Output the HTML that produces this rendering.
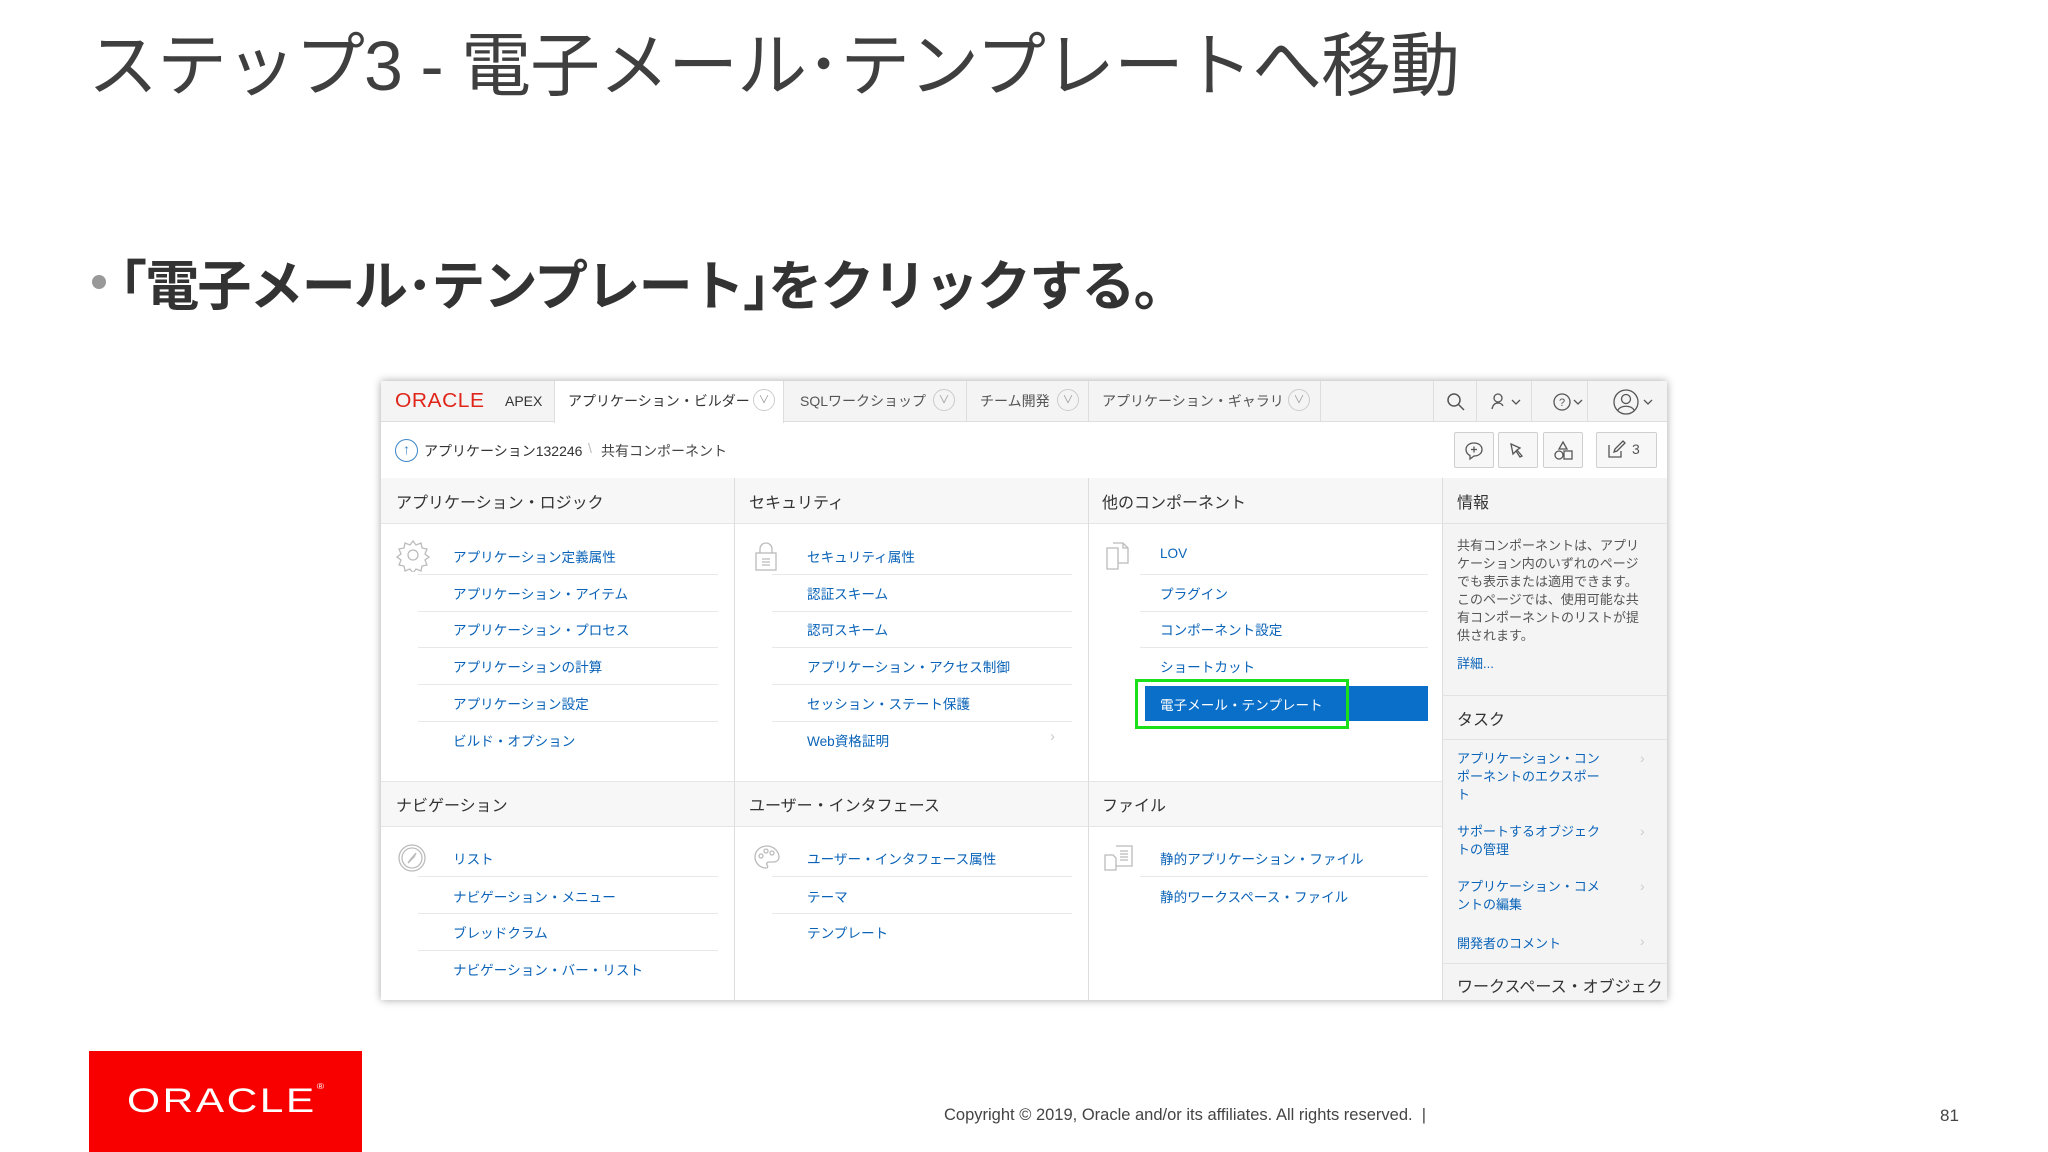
<!DOCTYPE html>
<html><head><meta charset="utf-8"><style>
*{margin:0;padding:0;box-sizing:border-box}
body{width:2048px;height:1152px;background:#fff;position:relative;overflow:hidden;font-family:"Liberation Sans","Noto Sans CJK JP",sans-serif}
.a{position:absolute;white-space:nowrap}
.lk{position:absolute;font-size:13.6px;color:#0a63b8;white-space:nowrap}
.hd{position:absolute;font-size:16px;color:#333;white-space:nowrap}
.sep{position:absolute;height:1px;background:#e8e8e8}
.ln{position:absolute;background:#ddd}
.btn{position:absolute;top:432px;height:36px;border:1px solid #cfcfcf;border-radius:2px;background:#f7f7f7}
</style></head><body>
<div class="a" style="left:88px;top:10px;font-size:70px;color:#3f3f3f;letter-spacing:-1px">ステップ3 - 電子メール･テンプレートへ移動</div>
<div class="a" style="left:92px;top:275px;width:14px;height:14px;border-radius:50%;background:#999"></div>
<div class="a" style="left:120px;top:242px;font-size:54px;color:#333;font-weight:bold;letter-spacing:-1.8px">｢電子メール･テンプレート｣をクリックする。</div>

<!-- screenshot -->
<div class="a" style="left:381px;top:381px;width:1286px;height:619px;background:#fff;box-shadow:0 0 8px rgba(0,0,0,.35)"></div>
<div class="a" style="left:381px;top:381px;width:1286px;height:41px;background:#f4f4f4;border-bottom:1px solid #ddd"></div>
<div class="a" style="left:554px;top:381px;width:230px;height:42px;background:#fff;border-left:1px solid #ddd;border-right:1px solid #ddd"></div>
<div class="a" style="left:395px;top:390px;font-size:20px;color:#e0261b;letter-spacing:0.5px;transform:scaleX(1.05);transform-origin:left">ORACLE</div>
<div class="a" style="left:505px;top:393px;font-size:14px;color:#333">APEX</div>
<div class="a" style="left:568px;top:391px;font-size:14px;color:#333">アプリケーション・ビルダー</div>
<div class="a" style="left:800px;top:391px;font-size:14px;color:#555">SQLワークショップ</div>
<div class="a" style="left:980px;top:391px;font-size:14px;color:#555">チーム開発</div>
<div class="a" style="left:1102px;top:391px;font-size:14px;color:#555">アプリケーション・ギャラリ</div>
<div class="a" style="left:753px;top:389px;width:22px;height:22px;border:1px solid #ccc;border-radius:50%;color:#999;font-size:11px;text-align:center;line-height:20px">∨</div>
<div class="a" style="left:933px;top:389px;width:22px;height:22px;border:1px solid #ccc;border-radius:50%;color:#999;font-size:11px;text-align:center;line-height:20px">∨</div>
<div class="a" style="left:1057px;top:389px;width:22px;height:22px;border:1px solid #ccc;border-radius:50%;color:#999;font-size:11px;text-align:center;line-height:20px">∨</div>
<div class="a" style="left:1288px;top:389px;width:22px;height:22px;border:1px solid #ccc;border-radius:50%;color:#999;font-size:11px;text-align:center;line-height:20px">∨</div>
<div class="ln" style="left:966px;top:381px;width:1px;height:41px"></div>
<div class="ln" style="left:1088px;top:381px;width:1px;height:41px"></div>
<div class="ln" style="left:1320px;top:381px;width:1px;height:41px"></div>
<div class="ln" style="left:1433px;top:381px;width:1px;height:41px"></div>
<div class="ln" style="left:1476px;top:381px;width:1px;height:41px"></div>
<div class="ln" style="left:1531px;top:381px;width:1px;height:41px"></div>
<div class="ln" style="left:1587px;top:381px;width:1px;height:41px"></div>
<svg class="a" style="left:1445px;top:391px" width="22" height="22" viewBox="0 0 22 22" fill="none" stroke="#555" stroke-width="1.5"><circle cx="9" cy="9" r="6"/><path d="M13.5 13.5L19 19"/></svg>
<svg class="a" style="left:1490px;top:391px" width="36" height="22" viewBox="0 0 36 22" fill="none" stroke="#555" stroke-width="1.3"><circle cx="8" cy="7" r="4"/><path d="M2 18c1-5 4-6 6-6s4 1 5 3"/><path d="M22 9l4 4 4-4"/></svg>
<svg class="a" style="left:1552px;top:391px" width="34" height="22" viewBox="0 0 34 22" fill="none" stroke="#555" stroke-width="1.3"><circle cx="10" cy="11" r="8"/><text x="7" y="15" font-size="11" fill="#555" stroke="none" font-family="Liberation Sans">?</text><path d="M22 9l4 4 4-4"/></svg>
<svg class="a" style="left:1612px;top:387px" width="44" height="30" viewBox="0 0 44 30" fill="none" stroke="#555" stroke-width="1.3"><circle cx="14" cy="15" r="12"/><circle cx="14" cy="12" r="4.5"/><path d="M6 23c3-5 13-5 16 0"/><path d="M32 13l4 4 4-4"/></svg>
<div class="a" style="left:395px;top:439px;width:23px;height:23px;border:1.5px solid #3b85c8;border-radius:50%;color:#3b85c8;font-size:14px;text-align:center;line-height:19px">↑</div>
<div class="a" style="left:424px;top:441px;font-size:14px;color:#333">アプリケーション132246</div>
<div class="a" style="left:588px;top:440px;font-size:14px;color:#bbb">\</div>
<div class="a" style="left:601px;top:441px;font-size:14px;color:#444">共有コンポーネント</div>
<div class="btn" style="left:1454px;width:40px"></div>
<div class="btn" style="left:1498px;width:40px"></div>
<div class="btn" style="left:1543px;width:40px"></div>
<div class="btn" style="left:1596px;width:61px"></div>
<svg class="a" style="left:1463px;top:440px" width="22" height="22" viewBox="0 0 22 22" fill="none" stroke="#555" stroke-width="1.3"><path d="M11 3c5 0 8 3 8 6.5S16 16 11 16l-4 3v-3.5C4 14 3 12 3 9.5 3 6 6 3 11 3z"/><path d="M11 6.5v6M8 9.5h6"/></svg>
<svg class="a" style="left:1507px;top:440px" width="22" height="22" viewBox="0 0 22 22" fill="none" stroke="#555" stroke-width="1.3"><path d="M4 4l9 4-3 2 5 6-2 1-4-6-3 3z"/></svg>
<svg class="a" style="left:1552px;top:440px" width="22" height="22" viewBox="0 0 22 22" fill="none" stroke="#555" stroke-width="1.3"><path d="M11 2l4 7H7z"/><circle cx="7" cy="15" r="4"/><rect x="12" y="11" width="8" height="8"/></svg>
<svg class="a" style="left:1606px;top:440px" width="20" height="20" viewBox="0 0 20 20" fill="none" stroke="#555" stroke-width="1.3"><path d="M3 5v12h12v-6"/><path d="M8 12l1-3 8-8 2 2-8 8z"/></svg>
<div class="a" style="left:1632px;top:441px;font-size:14px;color:#555">3</div>
<div class="ln" style="left:381px;top:478px;width:1061px;height:1px"></div>
<div class="a" style="left:381px;top:478px;width:1061px;height:46px;background:#f7f7f7;border-bottom:1px solid #e5e5e5"></div>
<div class="a" style="left:381px;top:781px;width:1061px;height:46px;background:#f7f7f7;border-top:1px solid #e5e5e5;border-bottom:1px solid #e5e5e5"></div>
<div class="ln" style="left:734px;top:478px;width:1px;height:522px"></div>
<div class="ln" style="left:1088px;top:478px;width:1px;height:522px"></div>
<div class="a" style="left:1442px;top:478px;width:225px;height:522px;background:#f4f4f4;border-left:1px solid #ddd"></div>
<div class="a" style="left:1442px;top:478px;width:225px;height:46px;border-bottom:1px solid #e2e2e2"></div>
<div class="a" style="left:1442px;top:695px;width:225px;height:45px;border-top:1px solid #e2e2e2;border-bottom:1px solid #e2e2e2"></div>
<div class="a" style="left:1442px;top:963px;width:225px;height:1px;background:#e2e2e2"></div>
<div class="hd" style="left:396px;top:489px">アプリケーション・ロジック</div>
<div class="hd" style="left:749px;top:489px">セキュリティ</div>
<div class="hd" style="left:1102px;top:489px">他のコンポーネント</div>
<div class="hd" style="left:1457px;top:489px">情報</div>
<div class="hd" style="left:396px;top:792px">ナビゲーション</div>
<div class="hd" style="left:749px;top:792px">ユーザー・インタフェース</div>
<div class="hd" style="left:1102px;top:792px">ファイル</div>
<div class="hd" style="left:1457px;top:706px">タスク</div>
<div class="a" style="left:1457px;top:537px;font-size:13px;line-height:18px;color:#555;white-space:normal;width:200px">共有コンポーネントは、アプリ<br>ケーション内のいずれのページ<br>でも表示または適用できます。<br>このページでは、使用可能な共<br>有コンポーネントのリストが提<br>供されます。</div>
<div class="lk" style="left:1457px;top:653px;font-size:13px">詳細...</div>
<div class="lk" style="left:1457px;top:750px;font-size:13px;line-height:18px">アプリケーション・コン<br>ポーネントのエクスポー<br>ト</div>
<div class="lk" style="left:1457px;top:823px;font-size:13px;line-height:18px">サポートするオブジェク<br>トの管理</div>
<div class="lk" style="left:1457px;top:878px;font-size:13px;line-height:18px">アプリケーション・コメ<br>ントの編集</div>
<div class="lk" style="left:1457px;top:933px;font-size:13px">開発者のコメント</div>
<div class="a" style="left:1640px;top:750px;color:#ccc;font-size:14px">›</div>
<div class="a" style="left:1640px;top:823px;color:#ccc;font-size:14px">›</div>
<div class="a" style="left:1640px;top:878px;color:#ccc;font-size:14px">›</div>
<div class="a" style="left:1640px;top:933px;color:#ccc;font-size:14px">›</div>
<div class="hd" style="left:1457px;top:973px">ワークスペース・オブジェク</div>
<svg class="a" style="left:396px;top:538px" width="34" height="34" viewBox="0 0 34 34" fill="none" stroke="#bbb" stroke-width="1.3"><circle cx="17" cy="17" r="5"/><path d="M17 3l3 4 5-2 1 5 5 1-2 5 4 3-4 3 2 5-5 1-1 5-5-2-3 4-3-4-5 2-1-5-5-1 2-5-4-3 4-3-2-5 5-1 1-5 5 2z"/></svg>
<div class="lk" style="left:453px;top:546px">アプリケーション定義属性</div>
<div class="lk" style="left:453px;top:583px">アプリケーション・アイテム</div>
<div class="lk" style="left:453px;top:619px">アプリケーション・プロセス</div>
<div class="lk" style="left:453px;top:656px">アプリケーションの計算</div>
<div class="lk" style="left:453px;top:693px">アプリケーション設定</div>
<div class="lk" style="left:453px;top:730px">ビルド・オプション</div>
<div class="sep" style="left:418px;top:574px;width:300px"></div>
<div class="sep" style="left:418px;top:611px;width:300px"></div>
<div class="sep" style="left:418px;top:647px;width:300px"></div>
<div class="sep" style="left:418px;top:684px;width:300px"></div>
<div class="sep" style="left:418px;top:721px;width:300px"></div>
<svg class="a" style="left:396px;top:842px" width="32" height="32" viewBox="0 0 32 32" fill="none" stroke="#bbb" stroke-width="1.3"><circle cx="16" cy="16" r="13"/><circle cx="16" cy="16" r="10"/><path d="M20 11l-6 7-2 3 6-6z"/></svg>
<div class="lk" style="left:453px;top:848px">リスト</div>
<div class="lk" style="left:453px;top:886px">ナビゲーション・メニュー</div>
<div class="lk" style="left:453px;top:922px">ブレッドクラム</div>
<div class="lk" style="left:453px;top:959px">ナビゲーション・バー・リスト</div>
<div class="sep" style="left:418px;top:876px;width:300px"></div>
<div class="sep" style="left:418px;top:913px;width:300px"></div>
<div class="sep" style="left:418px;top:950px;width:300px"></div>
<svg class="a" style="left:752px;top:541px" width="28" height="32" viewBox="0 0 28 32" fill="none" stroke="#bbb" stroke-width="1.3"><path d="M8 12V8a6 6 0 0 1 12 0v4"/><rect x="4" y="12" width="20" height="17"/><path d="M10 18h8M10 21h8M10 24h8"/></svg>
<div class="lk" style="left:807px;top:546px">セキュリティ属性</div>
<div class="lk" style="left:807px;top:583px">認証スキーム</div>
<div class="lk" style="left:807px;top:619px">認可スキーム</div>
<div class="lk" style="left:807px;top:656px">アプリケーション・アクセス制御</div>
<div class="lk" style="left:807px;top:693px">セッション・ステート保護</div>
<div class="lk" style="left:807px;top:730px">Web資格証明</div>
<div class="a" style="left:1050px;top:728px;color:#ccc;font-size:15px">›</div>
<div class="sep" style="left:772px;top:574px;width:300px"></div>
<div class="sep" style="left:772px;top:611px;width:300px"></div>
<div class="sep" style="left:772px;top:647px;width:300px"></div>
<div class="sep" style="left:772px;top:684px;width:300px"></div>
<div class="sep" style="left:772px;top:721px;width:300px"></div>
<svg class="a" style="left:752px;top:843px" width="30" height="30" viewBox="0 0 30 30" fill="none" stroke="#bbb" stroke-width="1.3"><path d="M15 3C8 3 3 8 3 14s5 11 11 11c2 0 2-2 1-3s0-3 2-3h4c4 0 6-2 6-5 0-6-6-11-12-11z"/><circle cx="9" cy="13" r="2"/><circle cx="14" cy="8" r="2"/><circle cx="20" cy="10" r="2"/></svg>
<div class="lk" style="left:807px;top:848px">ユーザー・インタフェース属性</div>
<div class="lk" style="left:807px;top:886px">テーマ</div>
<div class="lk" style="left:807px;top:922px">テンプレート</div>
<div class="sep" style="left:772px;top:876px;width:300px"></div>
<div class="sep" style="left:772px;top:913px;width:300px"></div>
<svg class="a" style="left:1104px;top:540px" width="28" height="32" viewBox="0 0 28 32" fill="none" stroke="#bbb" stroke-width="1.3"><path d="M3 8h11v21H3z"/><path d="M9 3h10l5 5v15H14"/><path d="M19 3v5h5"/></svg>
<div class="lk" style="left:1160px;top:546px">LOV</div>
<div class="lk" style="left:1160px;top:583px">プラグイン</div>
<div class="lk" style="left:1160px;top:619px">コンポーネント設定</div>
<div class="lk" style="left:1160px;top:656px">ショートカット</div>
<div class="sep" style="left:1140px;top:574px;width:288px"></div>
<div class="sep" style="left:1140px;top:611px;width:288px"></div>
<div class="sep" style="left:1140px;top:647px;width:288px"></div>
<div class="a" style="left:1145px;top:686px;width:283px;height:35px;background:#0a6fc9"></div>
<div class="a" style="left:1160px;top:694px;font-size:13.6px;color:#fff">電子メール・テンプレート</div>
<div class="a" style="left:1135px;top:679px;width:214px;height:50px;border:3px solid #19e019"></div>
<svg class="a" style="left:1102px;top:842px" width="34" height="32" viewBox="0 0 34 32" fill="none" stroke="#bbb" stroke-width="1.3"><path d="M3 13h8l3 3v12H3z"/><path d="M14 4h16v20H14"/><path d="M18 9h8M18 12h8M18 15h8M18 18h8"/></svg>
<div class="lk" style="left:1160px;top:848px">静的アプリケーション・ファイル</div>
<div class="lk" style="left:1160px;top:886px">静的ワークスペース・ファイル</div>
<div class="sep" style="left:1140px;top:876px;width:288px"></div>

<div class="a" style="left:89px;top:1051px;width:273px;height:101px;background:#f80000"></div>
<div class="a" style="left:127px;top:1082px;font-size:34px;color:#fff;letter-spacing:2px;transform:scaleX(1.25);transform-origin:left">ORACLE<span style="font-size:8px;vertical-align:top">®</span></div>
<div class="a" style="left:944px;top:1106px;font-size:16.5px;color:#444">Copyright © 2019, Oracle and/or its affiliates. All rights reserved.&nbsp; |</div>
<div class="a" style="left:1940px;top:1106px;font-size:17px;color:#444">81</div>
</body></html>
